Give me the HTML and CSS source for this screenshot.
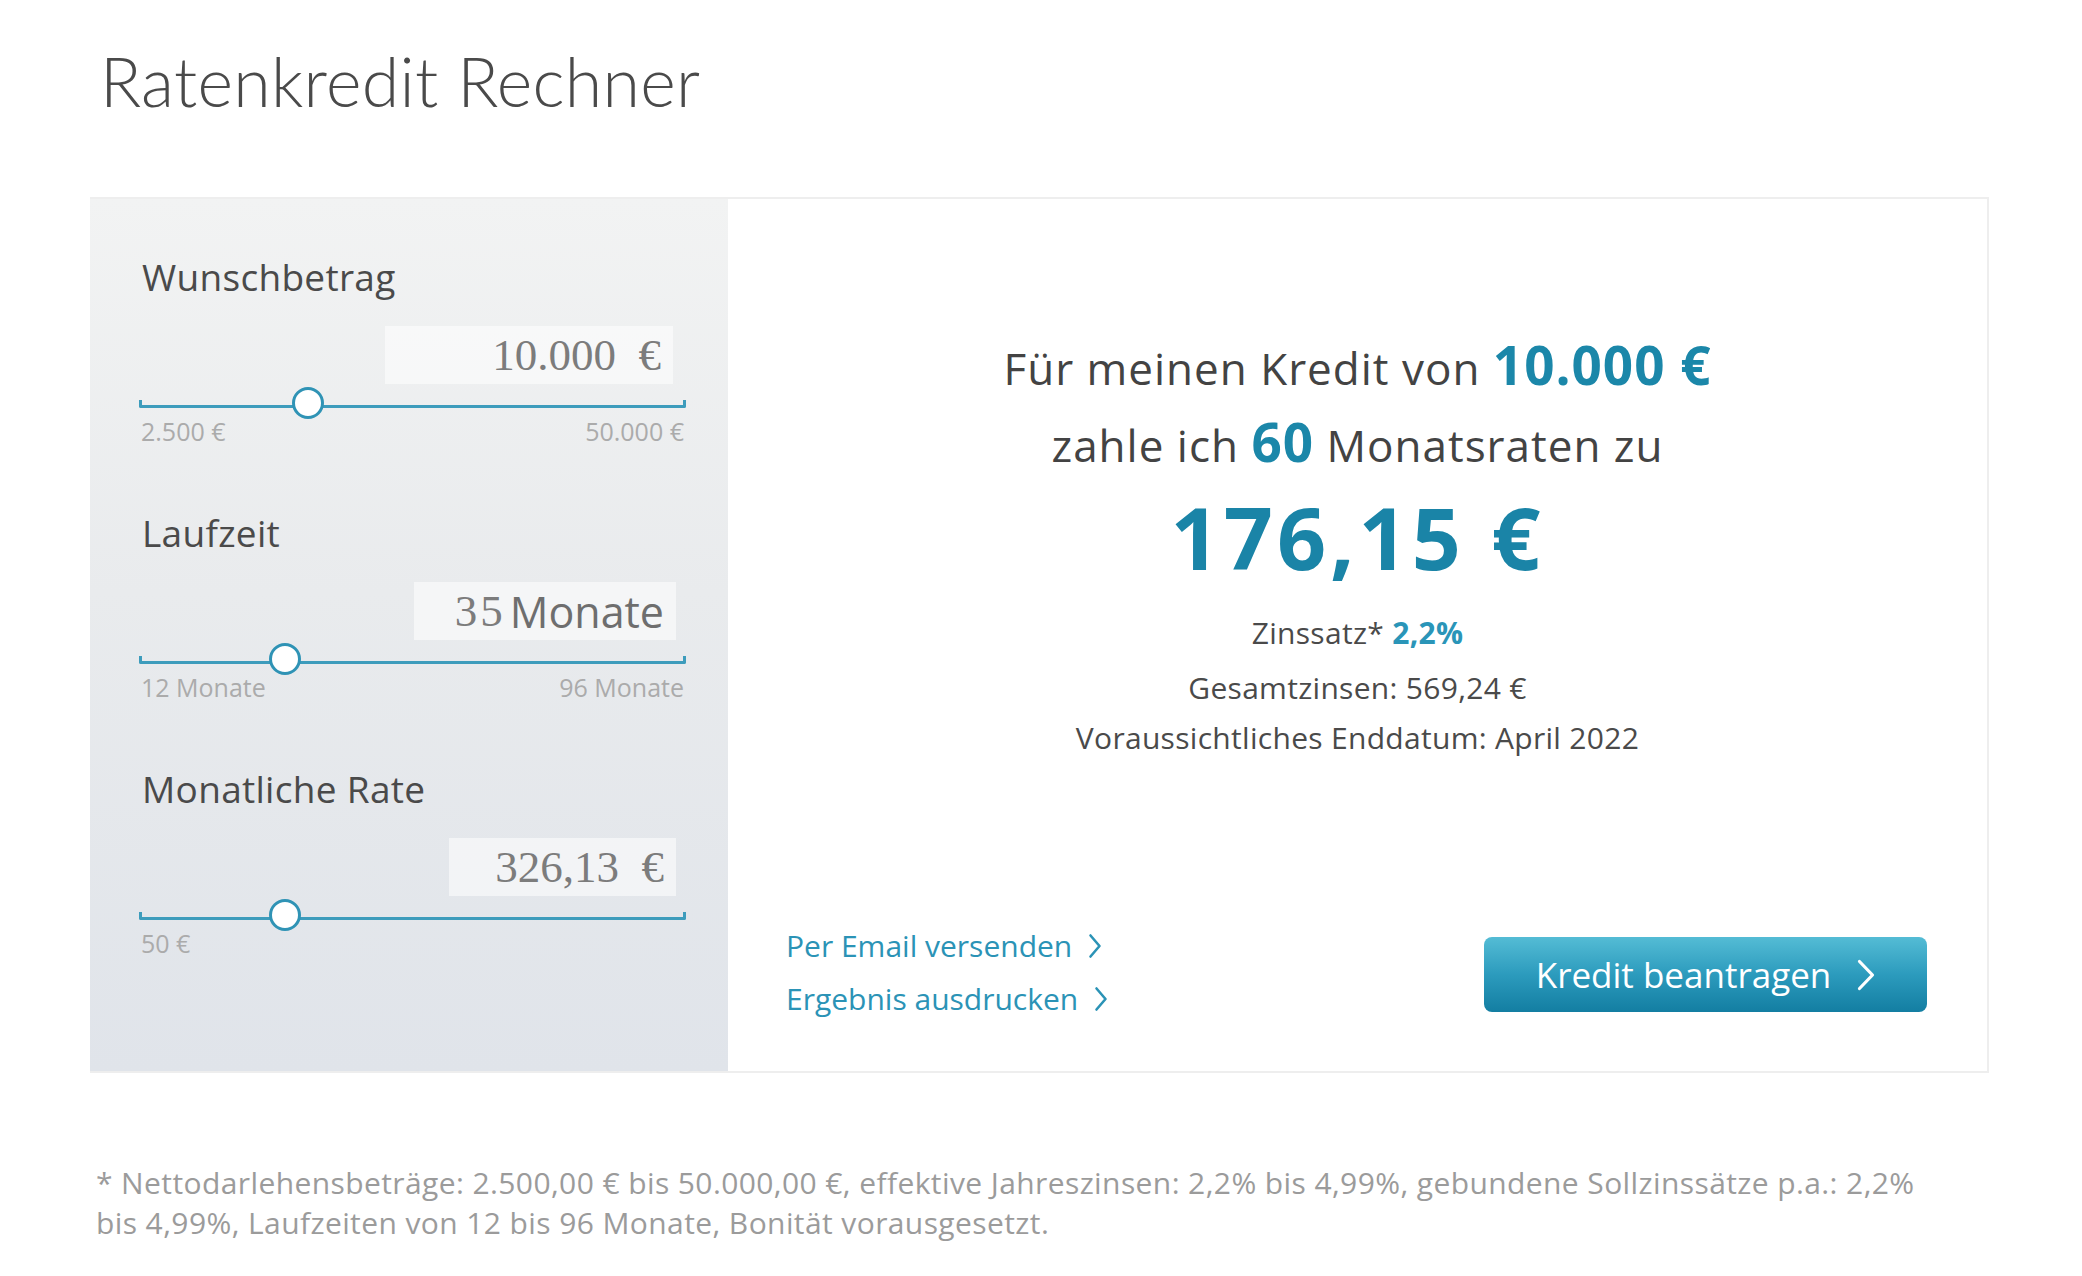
FILE: index.html
```html
<!DOCTYPE html>
<html lang="de">
<head>
<meta charset="utf-8">
<title>Ratenkredit Rechner</title>
<link rel="stylesheet" href="styles.css">
</head>
<body>
<main class="page">
  <h1 class="title">Ratenkredit Rechner</h1>

  <section class="card">
    <div class="inputs">
      <div class="field">
        <div class="field-label">Wunschbetrag</div>
        <div class="value-row">
          <div class="value-box box-amount"><span class="serif">10.000&nbsp; €</span></div>
        </div>
        <div class="slider">
          <div class="track"></div>
          <div class="thumb" style="left: 30.9%"></div>
        </div>
        <div class="range"><span>2.500 €</span><span>50.000 €</span></div>
      </div>

      <div class="field">
        <div class="field-label">Laufzeit</div>
        <div class="value-row">
          <div class="value-box box-term"><span class="serif serif-wide">35</span> <span class="sans">Monate</span></div>
        </div>
        <div class="slider">
          <div class="track"></div>
          <div class="thumb" style="left: 26.7%"></div>
        </div>
        <div class="range"><span>12 Monate</span><span>96 Monate</span></div>
      </div>

      <div class="field">
        <div class="field-label">Monatliche Rate</div>
        <div class="value-row">
          <div class="value-box box-rate"><span class="serif">326,13&nbsp; €</span></div>
        </div>
        <div class="slider">
          <div class="track"></div>
          <div class="thumb" style="left: 26.7%"></div>
        </div>
        <div class="range"><span>50 €</span></div>
      </div>
    </div>

    <div class="result">
      <div class="summary">
        <p class="line">Für meinen Kredit von <strong class="hl">10.000 €</strong></p>
        <p class="line">zahle ich <strong class="hl">60</strong> Monatsraten zu</p>
        <p class="big">176,15 €</p>
        <p class="meta meta-rate">Zinssatz* <strong class="hl-small">2,2%</strong></p>
        <p class="meta">Gesamtzinsen: 569,24 €</p>
        <p class="meta">Voraussichtliches Enddatum: April 2022</p>
      </div>

      <div class="actions">
        <div class="links">
          <a class="link" href="#">Per Email versenden
            <svg class="chev" viewBox="0 0 14 26" width="14" height="26"><path d="M2.5 2.5 L11.5 13 L2.5 23.5" fill="none" stroke="currentColor" stroke-width="2.6" stroke-linecap="round" stroke-linejoin="round"/></svg>
          </a>
          <a class="link" href="#">Ergebnis ausdrucken
            <svg class="chev" viewBox="0 0 14 26" width="14" height="26"><path d="M2.5 2.5 L11.5 13 L2.5 23.5" fill="none" stroke="currentColor" stroke-width="2.6" stroke-linecap="round" stroke-linejoin="round"/></svg>
          </a>
        </div>
        <a class="cta" href="#">Kredit beantragen
          <svg class="cta-chev" viewBox="0 0 18 32" width="18" height="32"><path d="M2.5 2.5 L15.5 16 L2.5 29.5" fill="none" stroke="#fff" stroke-width="3.2" stroke-linecap="round" stroke-linejoin="round"/></svg>
        </a>
      </div>
    </div>
  </section>

  <p class="footnote">* Nettodarlehensbeträge: 2.500,00 € bis 50.000,00 €, effektive Jahreszinsen: 2,2% bis 4,99%, gebundene Sollzinssätze p.a.: 2,2%<br>bis 4,99%, Laufzeiten von 12 bis 96 Monate, Bonität vorausgesetzt.</p>
</main>
</body>
</html>
```

FILE: styles.css
```css
* { box-sizing: border-box; }

html, body {
  margin: 0;
  padding: 0;
  background: #fff;
}

body {
  font-family: "Open Sans", Lato, "Liberation Sans", sans-serif;
  color: #444;
}

.page {
  width: 2082px;
  padding: 0 93px 0 90px;
}

.title {
  margin: 0;
  padding: 36px 0 0 10px;
  height: 197px;
  font-family: Lato, "Open Sans", sans-serif;
  font-weight: 300;
  font-size: 68px;
  line-height: 90px;
  color: #4a4a4a;
  letter-spacing: 0.3px;
}

.card {
  display: flex;
  height: 876px;
  border: 2px solid #eeeeee;
  border-left: none;
}

.inputs {
  width: 638px;
  flex: none;
  padding: 56px 42px 0 49px;
  background: linear-gradient(180deg, #f2f3f3 0%, #e9ebed 45%, #e0e4ea 100%);
}

.field { margin-bottom: 67px; }

.field-label {
  padding-left: 3px;
  font-size: 37px;
  line-height: 44px;
  color: #4a4a4a;
  letter-spacing: 0.3px;
}

.value-row {
  display: flex;
  justify-content: flex-end;
  margin-top: 27px;
  padding-right: 10px;
}

.value-box {
  height: 58px;
  background: rgba(255, 255, 255, 0.55);
  display: flex;
  align-items: center;
  justify-content: flex-end;
  padding-right: 12px;
  color: #7a7a7a;
  white-space: nowrap;
}

.box-amount { width: 288px; margin-right: 3px; }
.box-term { width: 262px; }
.box-rate { width: 227px; }

.serif {
  font-family: "Liberation Serif", "DejaVu Serif", serif;
  font-size: 45px;
  color: #7c7c7c;
}

.serif-wide { letter-spacing: 3px; }

.sans {
  font-family: "Open Sans", Lato, sans-serif;
  font-size: 43px;
  color: #6e6e6e;
  margin-left: 4px;
}

.slider {
  position: relative;
  height: 34px;
  margin-top: 2px;
  margin-bottom: -2px;
}

.track {
  position: absolute;
  left: 0;
  right: 0;
  top: 14px;
  height: 8px;
  border: 3px solid #3d9cbc;
  border-top: none;
  border-radius: 0 0 2px 2px;
}

.thumb {
  position: absolute;
  top: 1px;
  width: 32px;
  height: 32px;
  margin-left: -16px;
  border-radius: 50%;
  border: 3px solid #2f93b5;
  background: #fff;
}

.range {
  display: flex;
  justify-content: space-between;
  padding: 0 2px 0 2px;
  font-size: 25px;
  line-height: 26px;
  color: #ababab;
}

.result {
  flex: 1;
  display: flex;
  flex-direction: column;
  padding: 0 60px 50px 58px;
  background: #fff;
}

.summary {
  flex: 1;
  text-align: center;
  padding-top: 131px;
  padding-left: 2px;
}

.summary p { margin: 0; }

.line {
  height: 77px;
  font-size: 44px;
  line-height: 77px;
  letter-spacing: 1px;
  color: #434343;
}

.hl {
  font-weight: 700;
  font-size: 53px;
  line-height: 1;
  letter-spacing: 1px;
  color: #1b87a9;
}

.big {
  font-size: 86px;
  font-weight: 700;
  line-height: 106px;
  letter-spacing: 4px;
  color: #1a84a7;
}

.meta {
  font-size: 30px;
  line-height: 50px;
  letter-spacing: 0.3px;
  color: #4a4a4a;
}

.meta-rate { margin-top: 18px !important; margin-bottom: 5px !important; }

.hl-small {
  font-weight: 700;
  color: #2a95b8;
}

.actions {
  display: flex;
  justify-content: space-between;
  align-items: center;
}

.links {
  display: flex;
  flex-direction: column;
  gap: 17px;
  padding-bottom: 4px;
}

.link {
  display: flex;
  align-items: center;
  gap: 16px;
  font-size: 30px;
  line-height: 36px;
  color: #2b93b6;
  text-decoration: none;
}

.chev { flex: none; }

.cta {
  display: flex;
  align-items: center;
  justify-content: center;
  gap: 26px;
  width: 443px;
  height: 75px;
  border-radius: 8px;
  background: linear-gradient(180deg, #54bcd5 0%, #2c9bbd 50%, #137ea2 100%);
  color: #fff;
  font-size: 35px;
  text-decoration: none;
}

.cta-chev { flex: none; }

.footnote {
  margin: 90px 0 0 6px;
  font-size: 30px;
  line-height: 40px;
  letter-spacing: 0.4px;
  color: #9b9b9b;
}
```
